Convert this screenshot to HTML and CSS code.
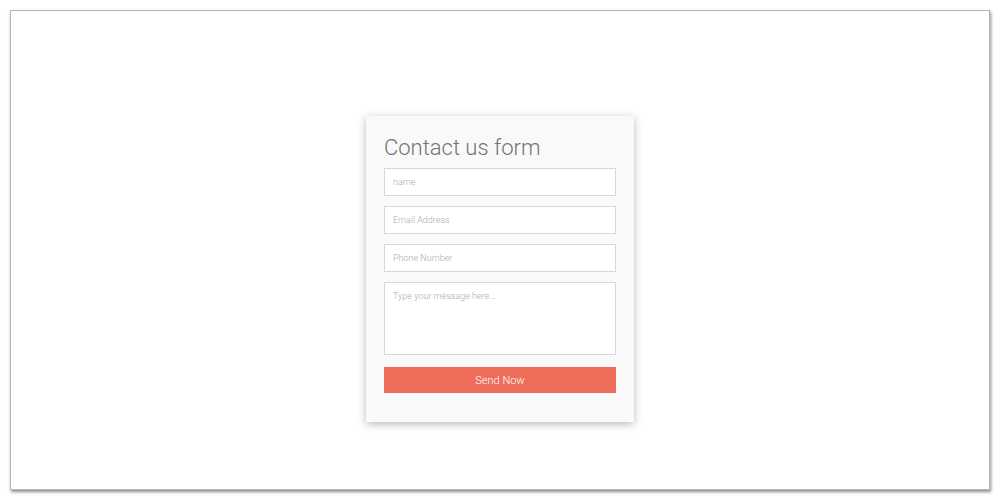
FILE: index.html
```html
<!DOCTYPE html>
<html>
<head>
<meta charset="utf-8">
<link rel="stylesheet" href="styles.css">
</head>
<body>
<div class="frame">
  <form class="card">
    <h2 class="title">Contact us form</h2>
    <input class="field" type="text" placeholder="name">
    <input class="field" type="text" placeholder="Email Address">
    <input class="field" type="text" placeholder="Phone Number">
    <textarea class="field area" placeholder="Type your message here..."></textarea>
    <button class="send" type="button">Send Now</button>
  </form>
</div>
</body>
</html>
```
FILE: styles.css
```css
html, body {
  margin: 0;
  padding: 0;
  background: #ffffff;
}
body {
  font-family: Roboto, "Liberation Sans", sans-serif;
}
.frame {
  box-sizing: border-box;
  margin: 10px;
  width: 980px;
  height: 480px;
  background: #ffffff;
  border: 1px solid #b5b5b5;
  box-shadow: 1px 2px 3px rgba(0,0,0,0.45);
  display: flex;
  justify-content: center;
  align-items: flex-start;
  padding-top: 105px;
}
.card {
  box-sizing: border-box;
  width: 268px;
  height: 306px;
  background: #f9f9f9;
  box-shadow: 0 2px 8px rgba(0,0,0,0.28);
  padding: 17px 18px 29px;
  display: flex;
  flex-direction: column;
  gap: 10px;
}
.title {
  margin: 0 0 -5px;
  font-weight: 300;
  font-size: 22px;
  line-height: 30px;
  color: #747474;
}
.field {
  box-sizing: border-box;
  display: block;
  width: 232px;
  height: 28px;
  margin: 0;
  padding: 0 8px;
  border: 1px solid #d8d8d8;
  background: #ffffff;
  font-family: Roboto, "Liberation Sans", sans-serif;
  font-weight: 300;
  font-size: 9px;
  color: #555;
  outline: none;
}
.field::placeholder {
  color: #ababab;
}
.area {
  height: 73px;
  padding: 8px 8px;
  resize: none;
}
.send {
  margin-top: 2px;
  width: 232px;
  height: 26px;
  border: none;
  background: #ee6e5a;
  color: #ffffff;
  font-family: Roboto, "Liberation Sans", sans-serif;
  font-weight: 300;
  font-size: 11px;
  padding: 0;
}
```
